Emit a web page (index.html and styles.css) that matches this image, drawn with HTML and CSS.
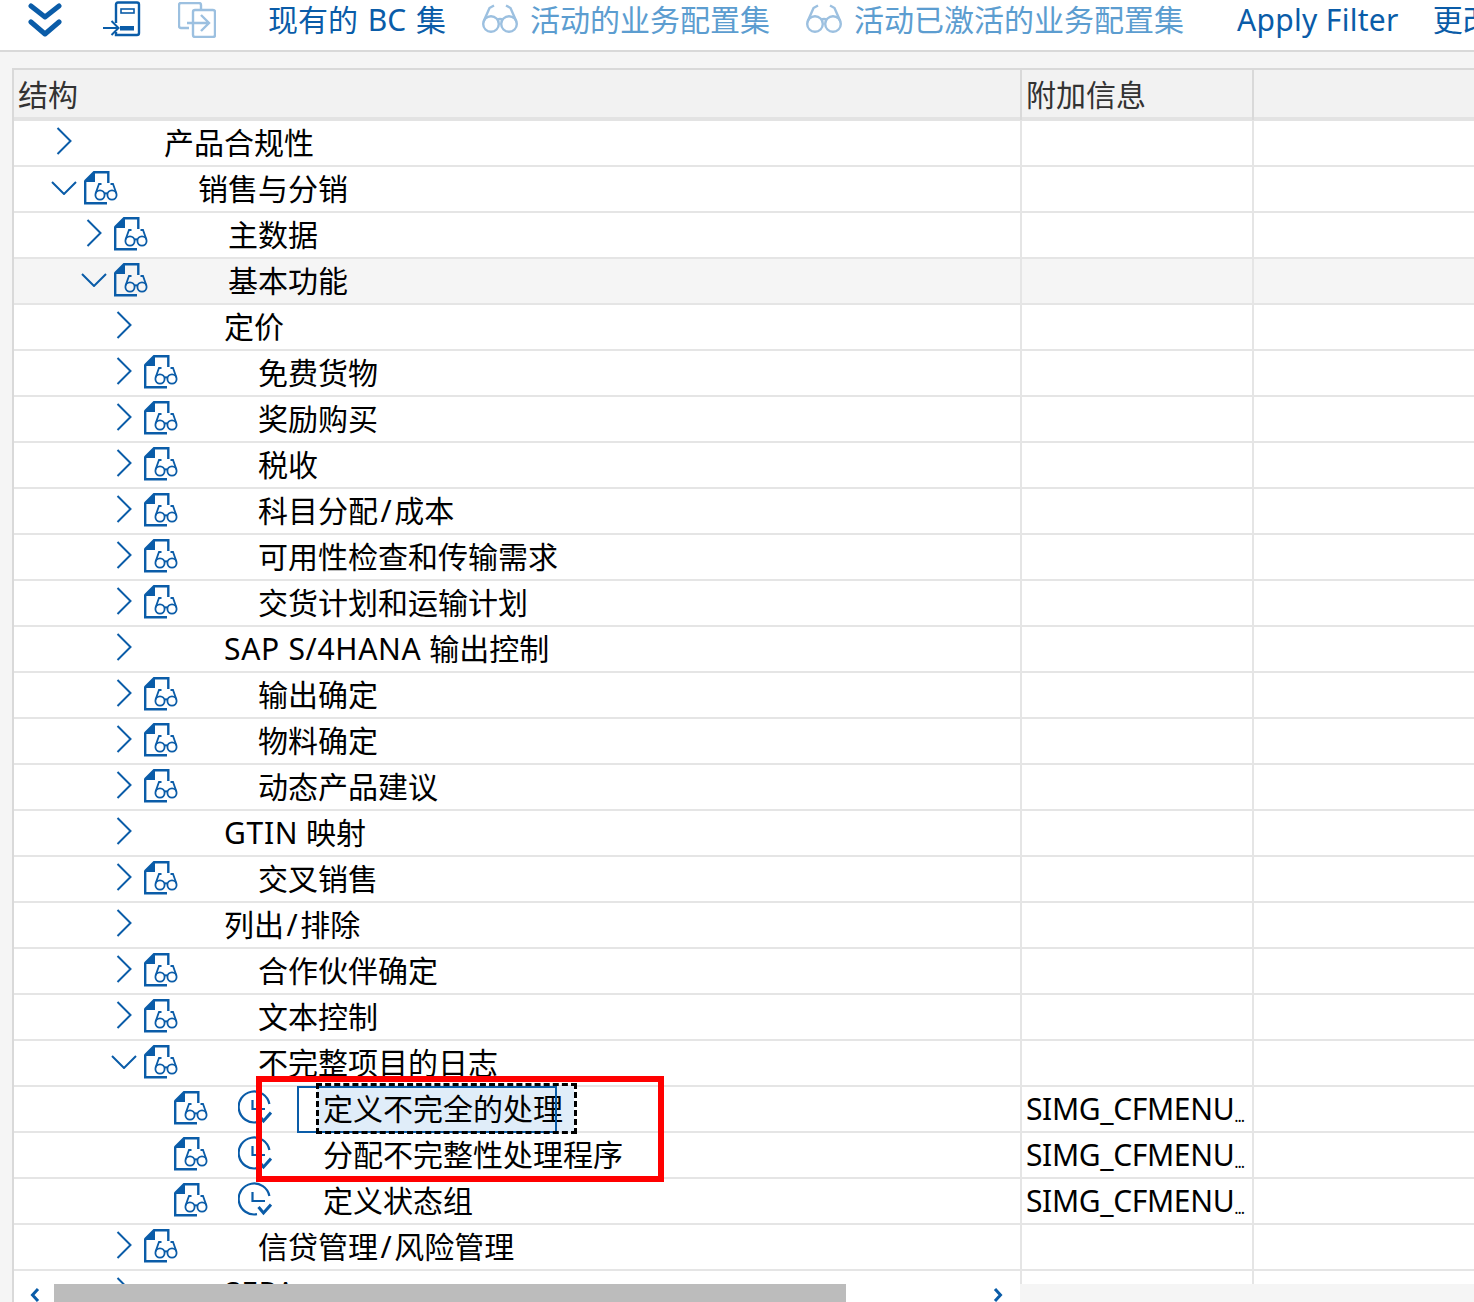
FILE: index.html
```html
<!DOCTYPE html>
<html lang="zh">
<head>
<meta charset="utf-8">
<title>结构</title>
<link rel="stylesheet" href="styles.css">
</head>
<body>
<svg class="defs" width="0" height="0" aria-hidden="true">
  <symbol id="chev-r" viewBox="0 0 16 28"><path d="M1.500 1 14.500 14 1.500 27" fill="none" stroke="currentColor" stroke-width="2"/></symbol>
  <symbol id="chev-d" viewBox="0 0 26 14"><path d="M1 1 13 13 25 1" fill="none" stroke="currentColor" stroke-width="2"/></symbol>
  <symbol id="doc" viewBox="0 0 35 34">
    <path d="M1.200 10V32.300H23M10 1.200H24.300V12" fill="none" stroke="currentColor" stroke-width="2.400"/>
    <path d="M0 9.500 9.500 0H11V11H0Z" fill="currentColor"/>
    <g fill="none" stroke="currentColor" stroke-width="1.800">
      <circle cx="16" cy="24" r="4.600"/><circle cx="28" cy="24" r="4.600"/>
      <path d="M20.500 22.800Q22 21.600 23.500 22.800M11.600 22.500 15 13H17.500M32.400 22.500 29 13H26.500"/>
    </g>
  </symbol>
  <symbol id="clock" viewBox="0 0 34 34">
    <g fill="none" stroke="currentColor" stroke-width="2.200">
      <path d="M19 32.200A15.500 15.500 0 1 1 31.400 14"/>
      <path d="M14.500 10V19H27"/>
    </g>
    <path d="M20.500 25 25.500 31 33 22.500" fill="none" stroke="currentColor" stroke-width="3"/>
  </symbol>
  <symbol id="glasses" viewBox="0 0 36 30">
    <g fill="none" stroke="currentColor" stroke-width="2.400">
      <circle cx="9" cy="20" r="7.800"/><circle cx="27" cy="20" r="7.800"/>
      <path d="M15 16Q18 14 21 16M1.800 17 7.500 4 12 1.500M34.200 17 28.500 4 24 1.500"/>
    </g>
  </symbol>
</svg>

<div class="app">
  <header class="toolbar">
    <svg class="tb-icon collapse" viewBox="0 0 34 34"><path d="M3 3 17 14 31 3M3 19 17 31 31 19" fill="none" stroke="currentColor" stroke-width="5" stroke-linecap="round" stroke-linejoin="round"/></svg>
    <svg class="tb-icon enter" viewBox="0 0 38 36"><path d="M13 22V3.500Q13 1.500 15 1.500H34Q36 1.500 36 3.500V32Q36 34 34 34H13V31" fill="none" stroke="currentColor" stroke-width="2.400"/><rect x="18" y="8" width="13" height="4" fill="none" stroke="currentColor" stroke-width="1.600"/><path d="M17 25H31V29.500H17Z" fill="currentColor"/><path d="M0 27H15M8.500 20 15.500 27 8.500 34" fill="none" stroke="currentColor" stroke-width="2"/></svg>
    <svg class="tb-icon exit" viewBox="0 0 38 36"><path d="M11 26H3Q1 26 1 24V3Q1 1 3 1H21Q23 1 23 3V7" fill="none" stroke="currentColor" stroke-width="2.400"/><rect x="15" y="8" width="22" height="27" rx="2" fill="none" stroke="currentColor" stroke-width="2.400"/><path d="M9 21H30M23 13 31 21 23 29" fill="none" stroke="currentColor" stroke-width="2.400"/></svg>
    <span class="tb-btn first">现有的 BC 集</span>
    <span class="tb-btn off second"><svg class="tb-glasses"><use href="#glasses"/></svg>活动的业务配置集</span>
    <span class="tb-btn off third"><svg class="tb-glasses"><use href="#glasses"/></svg>活动已激活的业务配置集</span>
    <span class="tb-btn fourth">Apply Filter</span>
    <span class="tb-btn fifth">更改活动</span>
  </header>

  <main class="panel">
    <div class="table">
      <div class="row head">
        <div class="cell tree"><span class="head-text">结构</span></div>
        <div class="cell info"><span class="head-text">附加信息</span></div>
        <div class="cell rest"></div>
      </div>
      <div class="body">
        <div class="row"><div class="cell tree l0"><svg class="arrow r"><use href="#chev-r"/></svg><span class="label">产品合规性</span></div><div class="cell info"></div><div class="cell rest"></div></div>
        <div class="row"><div class="cell tree l0"><svg class="arrow d"><use href="#chev-d"/></svg><svg class="doc"><use href="#doc"/></svg><span class="label">销售与分销</span></div><div class="cell info"></div><div class="cell rest"></div></div>
        <div class="row"><div class="cell tree l1"><svg class="arrow r"><use href="#chev-r"/></svg><svg class="doc"><use href="#doc"/></svg><span class="label">主数据</span></div><div class="cell info"></div><div class="cell rest"></div></div>
        <div class="row hover"><div class="cell tree l1"><svg class="arrow d"><use href="#chev-d"/></svg><svg class="doc"><use href="#doc"/></svg><span class="label">基本功能</span></div><div class="cell info"></div><div class="cell rest"></div></div>
        <div class="row"><div class="cell tree l2"><svg class="arrow r"><use href="#chev-r"/></svg><span class="label">定价</span></div><div class="cell info"></div><div class="cell rest"></div></div>
        <div class="row"><div class="cell tree l2"><svg class="arrow r"><use href="#chev-r"/></svg><svg class="doc"><use href="#doc"/></svg><span class="label">免费货物</span></div><div class="cell info"></div><div class="cell rest"></div></div>
        <div class="row"><div class="cell tree l2"><svg class="arrow r"><use href="#chev-r"/></svg><svg class="doc"><use href="#doc"/></svg><span class="label">奖励购买</span></div><div class="cell info"></div><div class="cell rest"></div></div>
        <div class="row"><div class="cell tree l2"><svg class="arrow r"><use href="#chev-r"/></svg><svg class="doc"><use href="#doc"/></svg><span class="label">税收</span></div><div class="cell info"></div><div class="cell rest"></div></div>
        <div class="row"><div class="cell tree l2"><svg class="arrow r"><use href="#chev-r"/></svg><svg class="doc"><use href="#doc"/></svg><span class="label">科目分配<span class="slash">/</span>成本</span></div><div class="cell info"></div><div class="cell rest"></div></div>
        <div class="row"><div class="cell tree l2"><svg class="arrow r"><use href="#chev-r"/></svg><svg class="doc"><use href="#doc"/></svg><span class="label">可用性检查和传输需求</span></div><div class="cell info"></div><div class="cell rest"></div></div>
        <div class="row"><div class="cell tree l2"><svg class="arrow r"><use href="#chev-r"/></svg><svg class="doc"><use href="#doc"/></svg><span class="label">交货计划和运输计划</span></div><div class="cell info"></div><div class="cell rest"></div></div>
        <div class="row"><div class="cell tree l2"><svg class="arrow r"><use href="#chev-r"/></svg><span class="label"><span class="latin">SAP S/4HANA</span> 输出控制</span></div><div class="cell info"></div><div class="cell rest"></div></div>
        <div class="row"><div class="cell tree l2"><svg class="arrow r"><use href="#chev-r"/></svg><svg class="doc"><use href="#doc"/></svg><span class="label">输出确定</span></div><div class="cell info"></div><div class="cell rest"></div></div>
        <div class="row"><div class="cell tree l2"><svg class="arrow r"><use href="#chev-r"/></svg><svg class="doc"><use href="#doc"/></svg><span class="label">物料确定</span></div><div class="cell info"></div><div class="cell rest"></div></div>
        <div class="row"><div class="cell tree l2"><svg class="arrow r"><use href="#chev-r"/></svg><svg class="doc"><use href="#doc"/></svg><span class="label">动态产品建议</span></div><div class="cell info"></div><div class="cell rest"></div></div>
        <div class="row"><div class="cell tree l2"><svg class="arrow r"><use href="#chev-r"/></svg><span class="label"><span class="latin">GTIN</span> 映射</span></div><div class="cell info"></div><div class="cell rest"></div></div>
        <div class="row"><div class="cell tree l2"><svg class="arrow r"><use href="#chev-r"/></svg><svg class="doc"><use href="#doc"/></svg><span class="label">交叉销售</span></div><div class="cell info"></div><div class="cell rest"></div></div>
        <div class="row"><div class="cell tree l2"><svg class="arrow r"><use href="#chev-r"/></svg><span class="label">列出<span class="slash">/</span>排除</span></div><div class="cell info"></div><div class="cell rest"></div></div>
        <div class="row"><div class="cell tree l2"><svg class="arrow r"><use href="#chev-r"/></svg><svg class="doc"><use href="#doc"/></svg><span class="label">合作伙伴确定</span></div><div class="cell info"></div><div class="cell rest"></div></div>
        <div class="row"><div class="cell tree l2"><svg class="arrow r"><use href="#chev-r"/></svg><svg class="doc"><use href="#doc"/></svg><span class="label">文本控制</span></div><div class="cell info"></div><div class="cell rest"></div></div>
        <div class="row"><div class="cell tree l2"><svg class="arrow d"><use href="#chev-d"/></svg><svg class="doc"><use href="#doc"/></svg><span class="label">不完整项目的日志</span></div><div class="cell info"></div><div class="cell rest"></div></div>
        <div class="row"><div class="cell tree l3"><svg class="doc"><use href="#doc"/></svg><svg class="clock"><use href="#clock"/></svg><span class="label selected">定义不完全的处理<i class="focus-box"></i><i class="dash-box"></i></span></div><div class="cell info"><span class="code">SIMG_CFMENU</span><span class="dots">...</span></div><div class="cell rest"></div></div>
        <div class="row"><div class="cell tree l3"><svg class="doc"><use href="#doc"/></svg><svg class="clock"><use href="#clock"/></svg><span class="label">分配不完整性处理程序</span></div><div class="cell info"><span class="code">SIMG_CFMENU</span><span class="dots">...</span></div><div class="cell rest"></div></div>
        <div class="row"><div class="cell tree l3"><svg class="doc"><use href="#doc"/></svg><svg class="clock"><use href="#clock"/></svg><span class="label">定义状态组</span></div><div class="cell info"><span class="code">SIMG_CFMENU</span><span class="dots">...</span></div><div class="cell rest"></div></div>
        <div class="row"><div class="cell tree l2"><svg class="arrow r"><use href="#chev-r"/></svg><svg class="doc"><use href="#doc"/></svg><span class="label">信贷管理<span class="slash">/</span>风险管理</span></div><div class="cell info"></div><div class="cell rest"></div></div>
        <div class="row"><div class="cell tree l2"><svg class="arrow r"><use href="#chev-r"/></svg><span class="label"><span class="latin">SEPA</span></span></div><div class="cell info"></div><div class="cell rest"></div></div>
      </div>
      <div class="scrollbar">
        <div class="track">
          <svg class="scroll-arrow" viewBox="0 0 10 16"><path d="M8 2 2.500 8 8 14" fill="none" stroke="currentColor" stroke-width="3"/></svg>
          <div class="thumb"></div>
          <svg class="scroll-arrow" viewBox="0 0 10 16"><path d="M2 2 7.500 8 2 14" fill="none" stroke="currentColor" stroke-width="3"/></svg>
        </div>
        <div class="scroll-rest"></div>
      </div>
    </div>
  </main>
  <div class="annotation"></div>
</div>
</body>
</html>
```
FILE: styles.css
```css
* { box-sizing: border-box; }
html, body { margin: 0; height: 100%; }
body {
  font-family: "Noto Sans", "Noto Sans CJK SC", sans-serif;
  font-size: 30px;
  color: #000;
  background: #f5f5f5;
  overflow: hidden;
}
.defs { position: absolute; }
.app { position: relative; height: 1302px; display: flex; flex-direction: column; overflow: hidden; }
.latin { letter-spacing: 0.7px; }
.slash { margin: 0 2.5px; }

/* toolbar */
.toolbar {
  height: 52px;
  flex: none;
  display: flex;
  align-items: flex-start;
  background: #fff;
  border-bottom: 2px solid #d9d9d9;
  color: #0a5ca8;
  white-space: nowrap;
  overflow: hidden;
}
.tb-icon { flex: none; }
.collapse { width: 34px; height: 34px; margin: 3px 0 0 28px; }
.enter { width: 38px; height: 36px; margin: 1px 0 0 41px; }
.exit { width: 38px; height: 36px; margin: 2px 0 0 37px; color: #9cc0e0; }
.tb-btn { line-height: 40px; display: inline-flex; align-items: flex-start; }
.off { color: #5c9dd0; }
.tb-glasses { width: 36px; height: 30px; margin: 4px 12px 0 0; color: #9cc0e0; flex: none; }
.first { margin-left: 52px; word-spacing: 2px; }
.second { margin-left: 36px; }
.third { margin-left: 36px; }
.fourth { margin-left: 53px; letter-spacing: 0.3px; }
.fifth { margin-left: 34px; }

/* panel and table */
.panel { flex: 1; min-height: 0; padding: 16px 0 0 12px; }
.table {
  height: 100%;
  border-top: 2px solid #d9d9d9;
  border-left: 2px solid #d9d9d9;
  background: #fff;
  display: flex;
  flex-direction: column;
}
.row {
  display: grid;
  grid-template-columns: 1008px 232px 1fr;
  height: 46px;
  border-bottom: 2px solid #e5e5e5;
  flex: none;
}
.row.hover { background: #f5f5f5; }
.row.head {
  height: 51px;
  background: #f2f2f2;
  border-bottom: 4px solid #e3e3e3;
  color: #333;
}
.row.head .cell { border-right-color: #d9d9d9; padding: 0; }
.head-text { padding-left: 4px; line-height: 50px; }
.body { flex: 1; min-height: 0; overflow: hidden; }
.cell {
  display: flex;
  align-items: center;
  border-right: 2px solid #e5e5e5;
  white-space: nowrap;
  min-width: 0;
}
.cell.rest { border-right: 0; }
.cell.info { padding-left: 4px; padding-bottom: 2px; }
.code { letter-spacing: -0.36px; }
.dots { font-size: 16px; align-self: flex-end; line-height: 26px; letter-spacing: -1px; }

.l0 { padding-left: 34px; }
.l1 { padding-left: 64px; }
.l2 { padding-left: 94px; }
.l3 { padding-left: 160px; }

.arrow { flex: none; color: #0a5ca8; }
.arrow.r { width: 16px; height: 28px; margin: -4px 12px 0 8px; }
.arrow.d { width: 26px; height: 14px; margin: -2px 7px 0 3px; }
.doc { width: 35px; height: 34px; color: #0a5ca8; flex: none; margin: -2px -1px 0 0; }
.clock { width: 34px; height: 34px; color: #0a5ca8; flex: none; margin: -4px 0 0 30px; }
.label { margin-left: 80px; position: relative; line-height: 40px; }
.clock + .label { margin-left: 51px; }

/* selected row */
.selected { z-index: 0; }
.selected::before {
  content: "";
  position: absolute;
  z-index: -1;
  left: -6px; top: -3px;
  width: 257px; height: 46px;
  background: #e0edf9;
}
.focus-box {
  position: absolute;
  left: -26px; top: -3px;
  width: 260px; height: 47px;
  border: 2px solid #0a5ca8;
}
.dash-box {
  position: absolute;
  left: -7px; top: -6px;
  width: 261px; height: 51px;
  border: 3px dashed #000;
}

/* scrollbar */
.scrollbar { height: 18px; flex: none; display: flex; position: relative; margin-top: -18px; }
.track {
  width: 1006px;
  background: #fff;
  display: flex;
  align-items: center;
  color: #0a5ca8;
}
.scroll-arrow { width: 10px; height: 16px; flex: none; margin-top: 4px; }
.scroll-arrow:first-child { margin-left: 16px; }
.thumb { width: 792px; height: 18px; margin-left: 14px; background: #bcbcbc; }
.track .scroll-arrow:last-child { margin-left: 147px; }
.scroll-rest { flex: 1; background: #f5f5f5; }

/* red annotation rectangle */
.annotation {
  position: absolute;
  left: 256px; top: 1076px;
  width: 408px; height: 106px;
  border: 6px solid #f00;
}
```
